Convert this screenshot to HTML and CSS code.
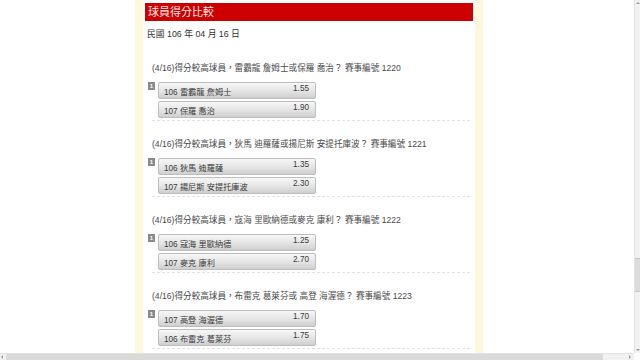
FILE: index.html
```html
<!DOCTYPE html>
<html lang="zh-Hant">
<head>
  <meta charset="UTF-8" />
  <title>球員得分比較</title>
  <link rel="stylesheet" href="styles.css">
</head>
<body>
  <div class="frame">
    <div class="panel">
      <h2 class="title">球員得分比較</h2>
      <p class="date">民國 106 年 04 月 16 日</p>

      <div class="match first">
        <p class="question">(4/16)得分較高球員，雷霸龍 詹姆士或保羅 喬治？ 賽事編號 1220</p>
        <div class="odds-row">
          <span class="badge">1</span>
          <div class="choices">
            <div class="choice"><span class="name">106 雷霸龍 詹姆士</span><span class="rate">1.55</span></div>
            <div class="choice"><span class="name">107 保羅 喬治</span><span class="rate">1.90</span></div>
          </div>
        </div>
      </div>

      <div class="match">
        <p class="question">(4/16)得分較高球員，狄馬 迪羅薩或揚尼斯 安提托庫波？ 賽事編號 1221</p>
        <div class="odds-row">
          <span class="badge">1</span>
          <div class="choices">
            <div class="choice"><span class="name">106 狄馬 迪羅薩</span><span class="rate">1.35</span></div>
            <div class="choice"><span class="name">107 揚尼斯 安提托庫波</span><span class="rate">2.30</span></div>
          </div>
        </div>
      </div>

      <div class="match">
        <p class="question">(4/16)得分較高球員，寇海 里歐納德或麥克 康利？ 賽事編號 1222</p>
        <div class="odds-row">
          <span class="badge">1</span>
          <div class="choices">
            <div class="choice"><span class="name">106 寇海 里歐納德</span><span class="rate">1.25</span></div>
            <div class="choice"><span class="name">107 麥克 康利</span><span class="rate">2.70</span></div>
          </div>
        </div>
      </div>

      <div class="match">
        <p class="question">(4/16)得分較高球員，布雷克 葛萊芬或 高登 海渥德？ 賽事編號 1223</p>
        <div class="odds-row">
          <span class="badge">1</span>
          <div class="choices">
            <div class="choice"><span class="name">107 高登 海渥德</span><span class="rate">1.70</span></div>
            <div class="choice"><span class="name">106 布雷克 葛萊芬</span><span class="rate">1.75</span></div>
          </div>
        </div>
      </div>
    </div>
  </div>

  <div class="vscroll">
    <span class="arrow up"></span>
    <span class="thumb"></span>
    <span class="arrow down"></span>
  </div>
  <div class="hscroll">
    <span class="arrow left"></span>
    <span class="thumb"></span>
    <span class="arrow right"></span>
  </div>
</body>
</html>
```

FILE: styles.css
```css
html, body {
  margin: 0;
  height: 100%;
  overflow: hidden;
  background: #fff;
}
body {
  font-family: "Liberation Sans", "Noto Sans CJK TC", sans-serif;
  color: #444;
}
.frame {
  margin-left: 135px;
  width: 332px;
  padding: 0 8px;
  background-color: #fff8dc;
  min-height: 100vh;
}
.panel {
  background: #fff;
  min-height: 100vh;
  padding: 3px 2px 0 2px;
}
.title {
  margin: 0;
  height: 18px;
  line-height: 18px;
  padding-left: 3px;
  background-color: #cc0000;
  color: #fbeaea;
  font-size: 11px;
  font-weight: normal;
}
.date {
  margin: 7px 0 0 2px;
  font-size: 8.8px;
  line-height: 12px;
  color: #333;
}
.match {
  padding: 17px 3px 0 7px;
}
.match.first {
  padding-top: 22px;
}
.question {
  margin: 0;
  font-size: 8.6px;
  line-height: 12px;
  color: #4a4a4a;
}
.odds-row {
  display: flex;
  align-items: flex-start;
  gap: 3px;
  margin-top: 8px;
  padding-bottom: 2px;
  border-bottom: 1px dashed #e2e2e2;
}
.badge {
  width: 7px;
  height: 8px;
  margin-left: -4px;
  background: #8a8a8a;
  color: #fff;
  font-size: 6px;
  line-height: 8px;
  font-weight: bold;
  text-align: center;
}
.choices {
  display: flex;
  flex-direction: column;
  gap: 2px;
}
.choice {
  display: flex;
  justify-content: space-between;
  align-items: flex-start;
  width: 145px;
  height: 15px;
  padding: 0 6px 0 5px;
  border: 1px solid #bdbdbd;
  border-radius: 2px;
  background: linear-gradient(#f7f7f7, #e4e4e4 55%, #cfcfcf);
  font-size: 8.2px;
  line-height: 12px;
  color: #3a3a3a;
}
.choice .name {
  margin-top: 4px;
}
.choice .rate {
  margin-top: 0;
}

.vscroll {
  position: fixed;
  top: 0;
  right: 0;
  width: 5px;
  height: 353px;
  background: #f1f1f1;
  border-left: 1px solid #e4e4e4;
}
.vscroll .thumb {
  position: absolute;
  left: 0;
  top: 258px;
  width: 5px;
  height: 32px;
  background: #dcdcdc;
  border-top: 1px solid #c8c8c8;
  border-bottom: 1px solid #c8c8c8;
}
.hscroll {
  position: fixed;
  left: 0;
  bottom: 0;
  width: 634px;
  height: 6px;
  background: #f1f1f1;
  border-top: 1px solid #e2e2e2;
}
.hscroll .thumb {
  position: absolute;
  left: 6px;
  top: 0;
  width: 597px;
  height: 6px;
  background: #dadada;
}
.arrow {
  position: absolute;
  width: 0;
  height: 0;
}
.arrow.up {
  top: 2px;
  left: 1px;
  border: 2px solid transparent;
  border-bottom-color: #999;
  border-top: 0;
}
.arrow.down {
  bottom: 2px;
  left: 1px;
  border: 2px solid transparent;
  border-top-color: #999;
  border-bottom: 0;
}
.arrow.left {
  left: 1px;
  top: 1px;
  border: 2px solid transparent;
  border-right-color: #999;
  border-left: 0;
}
.arrow.right {
  right: 3px;
  top: 1px;
  border: 2px solid transparent;
  border-left-color: #999;
  border-right: 0;
}
```
